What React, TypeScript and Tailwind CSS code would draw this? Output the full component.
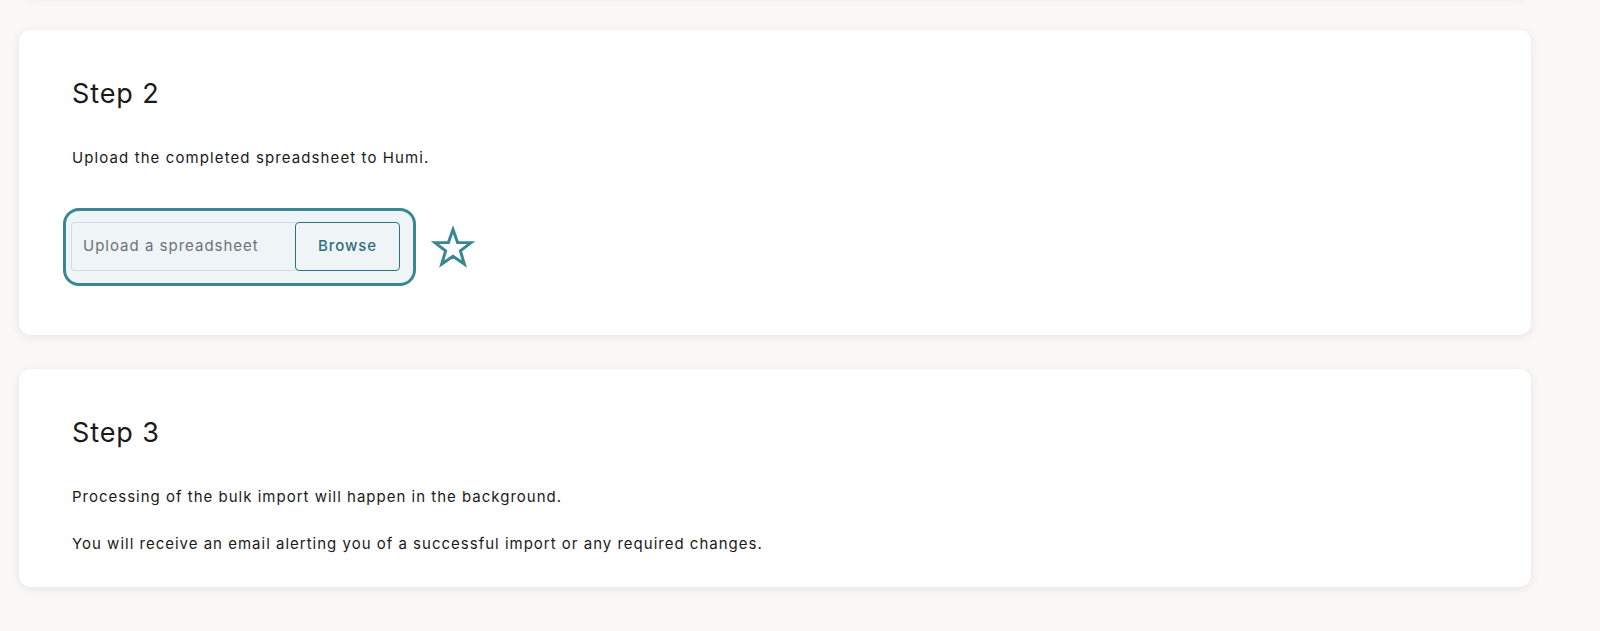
import React from 'react';

const font = { fontFamily: 'Inter, "Noto Sans", sans-serif' };

function StarOutline() {
  return (
    <svg width="44" height="42" viewBox="0 0 44 42" fill="none">
      <path
        d="M22 3.5 L26.6 16.4 L40.2 16.6 L29.4 24.9 L33.3 38 L22 30.2 L10.7 38 L14.6 24.9 L3.8 16.6 L17.4 16.4 Z"
        stroke="#3b8791"
        strokeWidth="3"
        strokeLinejoin="miter"
        fill="none"
      />
    </svg>
  );
}

function Card({ children, className = '' }: { children: React.ReactNode; className?: string }) {
  return (
    <div className={`bg-white rounded-xl shadow-[0_2px_10px_rgba(0,0,0,0.08)] px-[53px] ${className}`}>
      {children}
    </div>
  );
}

export default function App() {
  return (
    <div className="min-h-[631px] w-full bg-[#f9f8f6] overflow-hidden text-[#1a1a1c]" style={font}>
      <div className="ml-[19px] w-[1512px] flex flex-col gap-[34px] -mt-[84px]">
        {/* previous step, mostly scrolled away */}
        <Card className="h-[80px]">{null}</Card>

        <Card className="pt-[48px] pb-[49px]">
          <h2 className="text-[27px] leading-[32px] font-normal tracking-[0.9px]">Step 2</h2>
          <p className="mt-[37px] text-[15px] leading-[22px] tracking-[1.1px]">Upload the completed spreadsheet to Humi.</p>
          <div className="mt-[39px] -ml-[9px] flex items-center gap-[15px]">
            <div className="w-[353px] h-[78px] rounded-[16px] border-[3px] border-[#3b8791] bg-[#eff4f7] pl-[5px] pt-[11px]">
              <div className="flex h-[49px] w-[329px]">
                <div className="flex-1 flex items-center pl-[11px] border border-r-0 border-[#d3dbe0] rounded-l-[4px] text-[15px] tracking-[1px] text-[#6b7378]">
                  Upload a spreadsheet
                </div>
                <div className="w-[105px] flex items-center justify-center border border-[#2e7480] rounded-[4px] text-[15px] font-medium tracking-[0.9px] text-[#2e6f79]">
                  Browse
                </div>
              </div>
            </div>
            <StarOutline />
          </div>
        </Card>

        <Card className="pt-[48px] pb-[32px]">
          <h2 className="text-[27px] leading-[32px] font-normal tracking-[0.9px]">Step 3</h2>
          <p className="mt-[37px] text-[15px] leading-[22px] tracking-[1px]">Processing of the bulk import will happen in the background.</p>
          <p className="mt-[25px] text-[15px] leading-[22px] tracking-[1px]">
            You will receive an email alerting you of a successful import or any required changes.
          </p>
        </Card>
      </div>
    </div>
  );
}
